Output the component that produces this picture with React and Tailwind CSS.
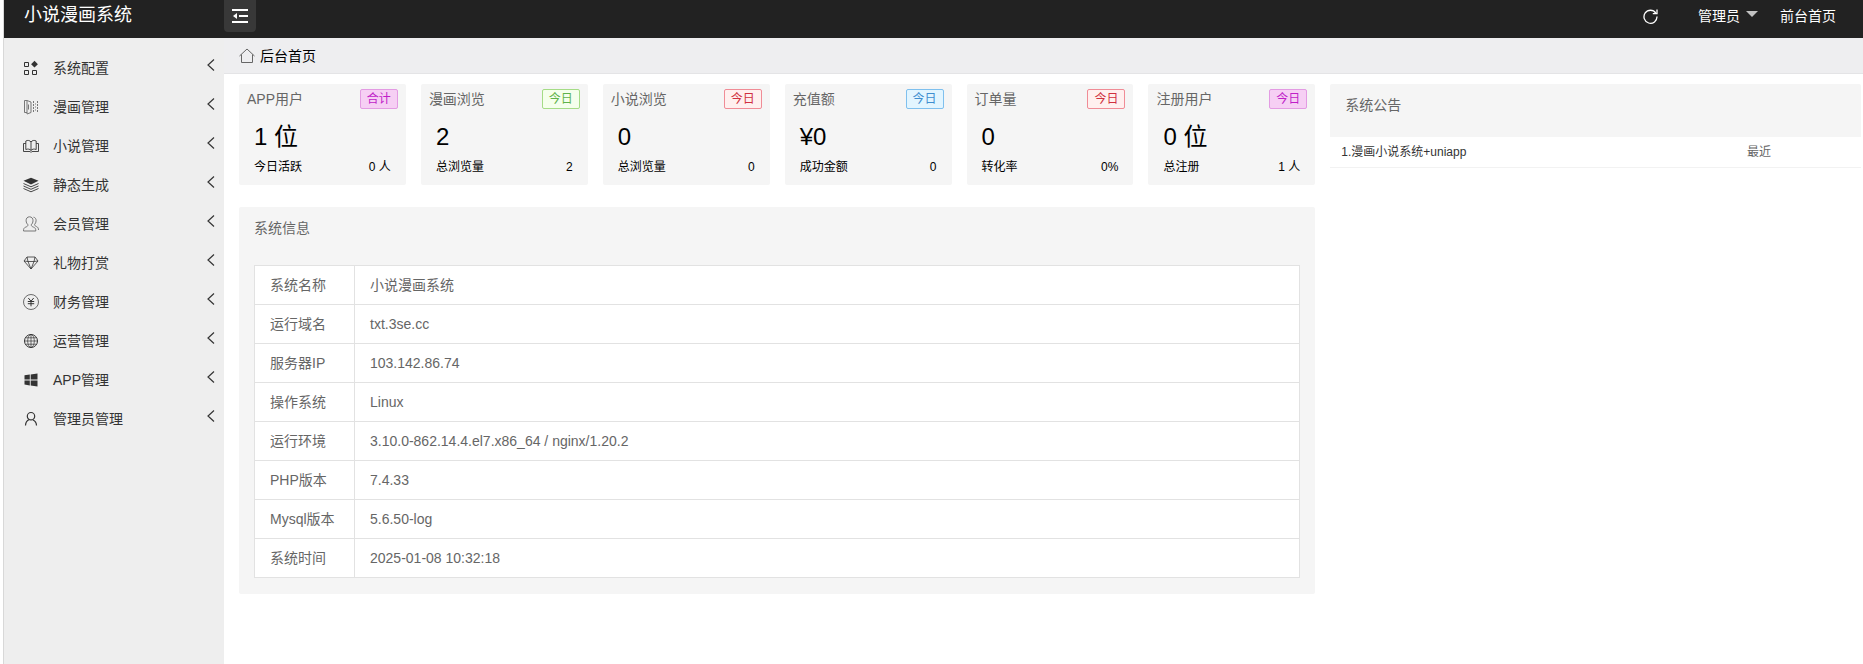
import { clsx } from 'clsx';

// 16px line glyphs used by the side menu
const icons = {
  config: (
    <>
      <path d="M1.5 2.5h4v4h-4zM1.5 10.5h4v4h-4zM9.5 10.5h4v4h-4z" />
      <path d="M11.500 .8l3.400 3.400-3.400 3.400-3.400-3.400z" fill="currentColor" stroke="none" />
    </>
  ),
  comic: (
    <>
      <path d="M4 1.500H1.500v12H4M4 1.500l4 1.500v10.500l-4 1.500zM5.500 5.500v5" />
      <path d="M10.500 2v12M14.500 2v12" strokeDasharray="2 1" />
      <path d="M12.500 4.500v8" strokeDasharray="1 2" />
    </>
  ),
  book: (
    <path d="M8 4C7 2.300 4.500 2 2.800 3v8.500C4.800 10.700 7 11 8 12.500c1-1.500 3.200-1.800 5.200-1V3C11.500 2 9 2.300 8 4zv8.500M2.800 5.500H.500v8h6.500c.5.8 1.500.8 2 0h6.500v-8h-2.300" strokeWidth="0.900" />
  ),
  layers: (
    <>
      <path d="M8 .8l7.500 3L8 7.500 .500 3.800z" fill="currentColor" stroke="none" />
      <path d="M.500 6.500L8 9.800 15.500 6.500M.500 9L8 12.300 15.500 9M.500 11.500L8 14.800l7.500-3.300" strokeWidth="0.900" />
    </>
  ),
  members: (
    <>
      <path d="M6.500 .8C4.200.8 3 2.500 3.100 4.800c.1 1.800.9 3 1.900 4-.1 1.400-1 1.800-2.300 2.300C1.200 11.700.500 12.500.500 15h12.300c0-2.500-.8-3.300-2.300-3.900C9.200 10.600 8.300 10.200 8.200 8.800c1-1 1.700-2.200 1.800-4C10.100 2.500 8.800.8 6.500.8z" />
      <path d="M10.500 1.200c1.700.2 2.700 1.600 2.600 3.600-.1 1.500-.6 2.700-1.500 3.600.1 1.300.8 1.700 1.900 2.200 1.400.6 2 1.500 2 3.400" />
    </>
  ),
  gem: <path d="M4 2h8l3 4-7 8-7-8zM1 6l4 .5h6l4-.5M5 6.500l3 7.500 3-7.500M4 2l1 4.500M12 2l-1 4.500" strokeWidth="0.800" />,
  money: (
    <>
      <circle cx="8" cy="8" r="7.500" strokeWidth="0.700" />
      <path d="M5.300 4L8 7.200 10.700 4M8 7.200V12.300M4.800 7.500h6.400M4.800 9.700h6.400" />
    </>
  ),
  globe: (
    <>
      <circle cx="8" cy="8" r="6.500" />
      <path d="M8 1.500v13M1.500 8h13M2.500 4.800h11M2.500 11.200h11" strokeWidth="0.700" />
      <ellipse cx="8" cy="8" rx="3.300" ry="6.500" strokeWidth="0.700" />
    </>
  ),
  app: (
    <path
      d="M1.500 3.300l5.300-.8v5H1.500zM7.700 2.400l6.800-1v6.100H7.700zM1.500 8.400h5.300v5l-5.300-.8zM7.700 8.400h6.800v6.100l-6.800-1z"
      fill="currentColor"
      stroke="none"
    />
  ),
  admin: (
    <>
      <circle cx="8" cy="5.200" r="3.700" strokeWidth="1.200" />
      <path d="M6.200 8.500C4 9.500 2.600 11.500 2.500 14.500M10 9c2 .9 3.400 2.800 3.500 5.500" strokeWidth="1.200" />
    </>
  ),
};

const menu = [
  { icon: 'config', label: '系统配置' },
  { icon: 'comic', label: '漫画管理', light: true },
  { icon: 'book', label: '小说管理' },
  { icon: 'layers', label: '静态生成' },
  { icon: 'members', label: '会员管理', light: true },
  { icon: 'gem', label: '礼物打赏' },
  { icon: 'money', label: '财务管理' },
  { icon: 'globe', label: '运营管理' },
  { icon: 'app', label: 'APP管理' },
  { icon: 'admin', label: '管理员管理' },
];

const tones = {
  purple: 'border-[#e39be3] bg-[#f6cff4] text-[#c01fc8]',
  green: 'border-[#a5dc86] bg-[#f5ffec] text-[#5fb24a]',
  red: 'border-[#f08c96] bg-[#fff0ef] text-[#d03040]',
  blue: 'border-[#7fc0ee] bg-[#e2f5ff] text-[#3e8ed0]',
};

const stats = [
  { title: 'APP用户', badge: '合计', tone: 'purple', value: '1 位', label: '今日活跃', total: '0 人' },
  { title: '漫画浏览', badge: '今日', tone: 'green', value: '2', label: '总浏览量', total: '2' },
  { title: '小说浏览', badge: '今日', tone: 'red', value: '0', label: '总浏览量', total: '0' },
  { title: '充值额', badge: '今日', tone: 'blue', value: '¥0', label: '成功金额', total: '0' },
  { title: '订单量', badge: '今日', tone: 'red', value: '0', label: '转化率', total: '0%' },
  { title: '注册用户', badge: '今日', tone: 'purple', value: '0 位', label: '总注册', total: '1 人' },
];

const info = [
  ['系统名称', '小说漫画系统'],
  ['运行域名', 'txt.3se.cc'],
  ['服务器IP', '103.142.86.74'],
  ['操作系统', 'Linux'],
  ['运行环境', '3.10.0-862.14.4.el7.x86_64 / nginx/1.20.2'],
  ['PHP版本', '7.4.33'],
  ['Mysql版本', '5.6.50-log'],
  ['系统时间', '2025-01-08 10:32:18'],
];

function Header() {
  return (
    <header className="flex h-[38px] items-start bg-[#222] text-white">
      <h1 className="w-[220px] shrink-0 pl-5 text-lg leading-[30px]">小说漫画系统</h1>
      <button type="button" aria-label="收起菜单" className="grid h-8 w-8 place-items-center rounded-b-sm bg-[#383838]">
        <svg width="16" height="14" viewBox="0 0 16 14" fill="none" stroke="currentColor" strokeWidth="2" aria-hidden="true">
          <path d="M0 1h16M7 7h9M0 13h16" />
          <path d="M5 4v6L1 7z" fill="currentColor" stroke="none" />
        </svg>
      </button>
      <nav className="ml-auto flex h-8 items-center pr-[27px] text-sm">
        <button type="button" aria-label="刷新" className="mr-10">
          <svg width="15" height="15" viewBox="0 0 15 15" fill="none" stroke="currentColor" strokeWidth="1.300" aria-hidden="true">
            <path d="M12.800 4A6.500 6.500 0 1 0 14 7.500" />
            <path d="M14 .500v4.200H9.800" />
          </svg>
        </button>
        <button type="button" className="mr-[22px] flex items-center gap-1.5">
          管理员
          <svg width="12" height="6" viewBox="0 0 12 6" className="mb-1" aria-hidden="true">
            <path d="M0 0h12L6 6z" fill="#c2c2c2" />
          </svg>
        </button>
        <a href="#home">前台首页</a>
      </nav>
    </header>
  );
}

function Sidebar() {
  return (
    <aside className="w-[220px] shrink-0 bg-[#eee] pt-2.5">
      {menu.map((m) => (
        <button
          key={m.label}
          type="button"
          className="flex h-[39px] w-full items-center pl-[19px] pr-[9px] text-sm text-[#333]"
        >
          <svg
            width="16"
            height="16"
            viewBox="0 0 16 16"
            fill="none"
            stroke="currentColor"
            className={clsx('mr-3.5 shrink-0', m.light && 'text-[#777]')}
            aria-hidden="true"
          >
            {icons[m.icon]}
          </svg>
          {m.label}
          <svg width="8" height="12" viewBox="0 0 8 12" fill="none" stroke="currentColor" strokeWidth="1.200" className="mb-1.5 ml-auto" aria-hidden="true">
            <path d="M7 .500L1 6l6 5.500" />
          </svg>
        </button>
      ))}
    </aside>
  );
}

function StatCard({ title, badge, tone, value, label, total }) {
  return (
    <section className="h-[101px] rounded-xs bg-[#f5f5f5] px-2 pt-[5px] text-black">
      <div className="flex items-center justify-between">
        <h2 className="text-sm leading-5 text-[#666]">{title}</h2>
        <span className={clsx('flex h-5 w-[38px] items-center justify-center rounded-xs border text-xs leading-4', tones[tone])}>
          {badge}
        </span>
      </div>
      <p className="mt-2.5 pl-[7px] text-2xl leading-9">{value}</p>
      <p className="flex justify-between px-[7px] text-xs leading-6">
        <span>{label}</span>
        <span>{total}</span>
      </p>
    </section>
  );
}

function SystemInfo() {
  return (
    <section className="mt-[22px] rounded-xs bg-[#f5f5f5] px-[15px] pb-4">
      <h2 className="h-[58px] text-sm leading-[42px]">系统信息</h2>
      <table className="w-full border-collapse border border-[#e2e2e2] bg-white text-left text-sm leading-5">
        <tbody>
          {info.map(([name, value]) => (
            <tr key={name} className="h-[39px] border-b border-[#e2e2e2]">
              <th scope="row" className="w-[100px] whitespace-nowrap border-r border-[#e2e2e2] px-[15px] font-normal">
                {name}
              </th>
              <td className="px-[15px]">{value}</td>
            </tr>
          ))}
        </tbody>
      </table>
    </section>
  );
}

function Notices() {
  return (
    <section className="border-b border-[#f2f2f2]">
      <h2 className="h-[53px] rounded-t-xs bg-[#f5f5f5] px-[15px] text-sm leading-[42px]">系统公告</h2>
      <div className="flex h-[30px] items-center pl-[11px] text-xs">
        <a href="#notice" className="flex-1 text-[#333]">1.漫画小说系统+uniapp</a>
        <span className="w-[114px]">最近</span>
      </div>
    </section>
  );
}

export default function App() {
  return (
    <div className="ml-[3px] flex min-h-screen flex-col border-l border-[#d8d8d8] bg-white font-['Liberation_Sans','Noto_Sans_CJK_SC',sans-serif] text-[#666]">
      <Header />
      <div className="flex flex-1">
        <Sidebar />
        <main className="min-w-0 flex-1">
          <div className="flex h-9 items-center gap-[5px] border-b border-[#e4e4e6] bg-[#eeeef0] pl-[15px] text-sm text-black">
            <svg width="16" height="16" viewBox="0 0 16 16" fill="none" stroke="#666" aria-hidden="true">
              <path d="M.500 8L8 1l7.500 7M2.500 6.500v8h11v-8" />
            </svg>
            <a href="#dashboard">后台首页</a>
          </div>
          <div className="grid grid-cols-12 items-start gap-[15px] pb-4 pl-[15px] pr-0.5 pt-2.5">
            <div className="col-span-8">
              <div className="grid grid-cols-6 gap-[15px]">
                {stats.map((s) => (
                  <StatCard key={s.title} {...s} />
                ))}
              </div>
              <SystemInfo />
            </div>
            <div className="col-span-4">
              <Notices />
            </div>
          </div>
        </main>
      </div>
    </div>
  );
}
